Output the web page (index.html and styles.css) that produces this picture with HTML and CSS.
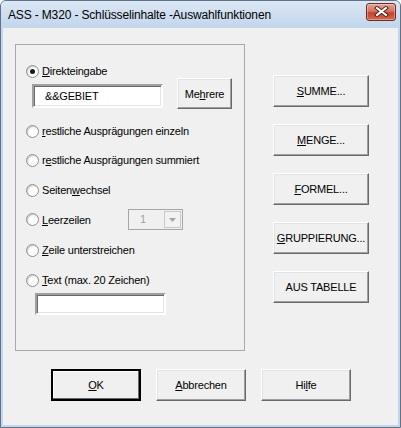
FILE: index.html
```
<!DOCTYPE html>
<html lang="de">
<head>
    <meta charset="UTF-8">
    <title>ASS - M320 - Schlüsselinhalte -Auswahlfunktionen</title>
    <link rel="stylesheet" href="styles.css">
</head>
<body>
    <div class="window">
        <div class="titlebar">
            <span class="title">ASS - M320 - Schlüsselinhalte -Auswahlfunktionen</span>
            <button class="close-btn" aria-label="Schließen">
                <svg width="15" height="11" viewBox="0 0 15 11">
                    <path d="M3 2 L12 9 M12 2 L3 9" stroke="#4a2320" stroke-width="4" stroke-linecap="square"/>
                    <path d="M3 2 L12 9 M12 2 L3 9" stroke="#ffffff" stroke-width="2" stroke-linecap="square"/>
                </svg>
            </button>
        </div>

        <div class="client">
            <div class="main">
                <div class="groupbox">
                    <label class="opt opt-first">
                        <span class="radio checked"></span>
                        <span><u>D</u>irekteingabe</span>
                    </label>
                    <div class="input-row">
                        <div class="textbox wide">&amp;&amp;GEBIET</div>
                        <button class="btn btn-small">Me<u>h</u>rere</button>
                    </div>
                    <label class="opt opt-a">
                        <span class="radio"></span>
                        <span><u>r</u>estliche Ausprägungen einzeln</span>
                    </label>
                    <label class="opt opt-b">
                        <span class="radio"></span>
                        <span>r<u>e</u>stliche Ausprägungen summiert</span>
                    </label>
                    <label class="opt opt-a">
                        <span class="radio"></span>
                        <span>Seiten<u>w</u>echsel</span>
                    </label>
                    <div class="opt opt-combo">
                        <span class="radio"></span>
                        <span class="combo-label"><u>L</u>eerzeilen</span>
                        <div class="combo">
                            <span class="combo-value">1</span>
                            <span class="combo-arrow">
                                <svg width="7" height="4" viewBox="0 0 7 4"><path d="M0 0 H7 L3.5 4 Z" fill="#a3a3a3"/></svg>
                            </span>
                        </div>
                    </div>
                    <label class="opt opt-c">
                        <span class="radio"></span>
                        <span><u>Z</u>eile unterstreichen</span>
                    </label>
                    <label class="opt opt-a">
                        <span class="radio"></span>
                        <span><u>T</u>ext (max. 20 Zeichen)</span>
                    </label>
                    <div class="textbox text-field"></div>
                </div>

                <div class="side-buttons">
                    <button class="btn btn-side"><u>S</u>UMME...</button>
                    <button class="btn btn-side"><u>M</u>ENGE...</button>
                    <button class="btn btn-side"><u>F</u>ORMEL...</button>
                    <button class="btn btn-side"><u>G</u>RUPPIERUNG...</button>
                    <button class="btn btn-side">AUS TABELLE</button>
                </div>
            </div>

            <div class="actions">
                <button class="btn btn-action default"><u>O</u>K</button>
                <button class="btn btn-action"><u>A</u>bbrechen</button>
                <button class="btn btn-action">Hi<u>l</u>fe</button>
            </div>
        </div>
    </div>
</body>
</html>
```

FILE: styles.css
```
:root {
    --face: #f0f0f0;
    --frame: #c2d6ec;
    --shadow: #a0a0a0;
    --dark: #696969;
    --light: #e3e3e3;
}

body {
    margin: 0;
    padding: 0;
    background: #ffffff;
    font-family: 'Liberation Sans', Arial, sans-serif;
    font-size: 11px;
    letter-spacing: -0.2px;
    color: #000;
}

.window {
    width: 401px;
    height: 428px;
    box-sizing: border-box;
    border: 1px solid #5f7287;
    border-radius: 6px 6px 0 0;
    background: var(--frame);
    display: flex;
    flex-direction: column;
    overflow: hidden;
}

.titlebar {
    height: 26px;
    display: flex;
    align-items: center;
    justify-content: space-between;
    padding: 0 4px 0 7px;
    background: linear-gradient(#dbe7f5, #c3d6ec);
}

.title {
    font-size: 12px;
    letter-spacing: -0.15px;
    padding-top: 2px;
    color: #000;
}

.close-btn {
    width: 30px;
    height: 18px;
    margin-top: -5px;
    padding: 0;
    border: 1px solid #6e2b24;
    border-radius: 3px;
    background: linear-gradient(#e8a293 0%, #d6735f 45%, #c5432c 55%, #d4684e 100%);
    display: flex;
    align-items: center;
    justify-content: center;
    box-shadow: inset 0 0 0 1px rgba(255, 255, 255, 0.35);
}

.client {
    flex: 1;
    margin: 0 2px 2px 2px;
    background: var(--face);
    padding: 16px 0 0 12px;
    border-top: 1px solid #c8d5e3;
}

.main {
    display: flex;
    align-items: flex-start;
}

.groupbox {
    width: 218px;
    height: 305px;
    border: 1px solid #a9a9a9;
    padding: 0 0 0 10px;
    box-sizing: content-box;
    display: flex;
    flex-direction: column;
    align-items: flex-start;
}

.opt {
    display: flex;
    align-items: center;
    height: 16px;
    line-height: 16px;
    margin-top: 13px;
}

.opt-first { margin-top: 18px; }
.opt-a { margin-top: 14px; }
.opt-b { margin-top: 13px; }
.opt-c { margin-top: 12px; }

.opt-combo {
    height: 21px;
    margin-top: 11px;
}

.radio {
    width: 11px;
    height: 11px;
    border-radius: 50%;
    border: 1px solid #8e8f8f;
    background: radial-gradient(circle at 60% 65%, #ffffff 40%, #e6e6e6 100%);
    box-shadow: inset 1px 1px 1px rgba(0, 0, 0, 0.15);
    margin-right: 3px;
    position: relative;
    flex: none;
}

.radio.checked::after {
    content: "";
    position: absolute;
    left: 3px;
    top: 3px;
    width: 5px;
    height: 5px;
    border-radius: 50%;
    background: #1a1a1a;
}

.textbox {
    box-sizing: border-box;
    background: #fff;
    border-style: solid;
    border-width: 2px;
    border-color: var(--shadow) #fff #fff var(--shadow);
    box-shadow: inset 1px 1px 0 var(--dark), inset -1px -1px 0 var(--light);
}

.input-row {
    display: flex;
    align-items: flex-start;
    margin: -1px 0 0 6px;
}

.textbox.wide {
    width: 131px;
    height: 24px;
    margin-top: 6px;
    padding: 4px 0 0 11px;
    margin-right: 14px;
}

.text-field {
    width: 131px;
    height: 22px;
    margin: 5px 0 0 9px;
}

.combo-label {
    width: 86px;
}

.combo {
    width: 55px;
    height: 21px;
    box-sizing: border-box;
    border: 1px solid #a6a6a6;
    background: var(--face);
    display: flex;
    align-items: stretch;
    padding: 1px;
}

.combo-value {
    flex: 1;
    color: #a0a0a0;
    padding-left: 10px;
    line-height: 17px;
}

.combo-arrow {
    width: 15px;
    border: 1px solid #c8c8c8;
    display: flex;
    align-items: center;
    justify-content: center;
    background: #f2f2f2;
}

.btn {
    font-family: 'Liberation Sans', Arial, sans-serif;
    font-size: 11px;
    letter-spacing: -0.2px;
    color: #000;
    background: var(--face);
    border-style: solid;
    border-width: 1px;
    border-color: #fff var(--dark) var(--dark) #fff;
    box-shadow: inset -1px -1px 0 var(--shadow), inset 1px 1px 0 var(--light);
    padding: 0;
    box-sizing: border-box;
}

.btn-small {
    width: 55px;
    height: 31px;
}

.side-buttons {
    margin: 31px 0 0 28px;
    display: flex;
    flex-direction: column;
    gap: 17px;
}

.btn-side {
    width: 96px;
    height: 32px;
}

.actions {
    display: flex;
    gap: 15px;
    margin: 18px 0 0 36px;
}

.btn-action {
    width: 90px;
    height: 32px;
}

.btn-action.default {
    border: 2px solid #000;
    box-shadow: inset -1px -1px 0 var(--dark), inset 1px 1px 0 #fff;
}
```
